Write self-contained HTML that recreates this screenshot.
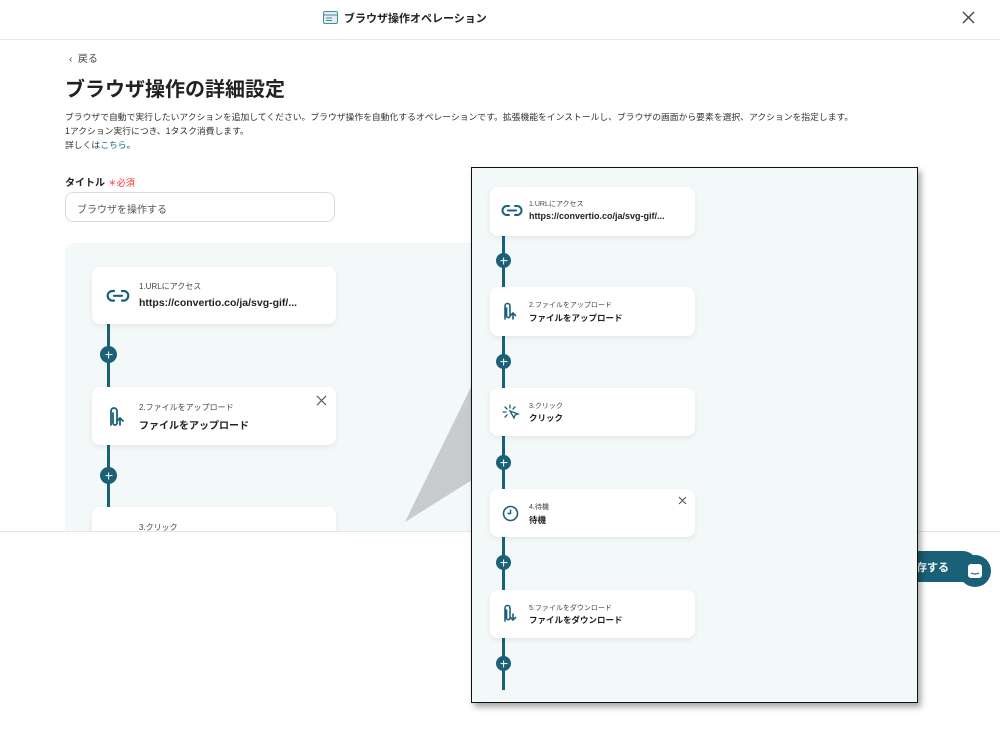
<!DOCTYPE html>
<html><head><meta charset="utf-8"><style>
*{box-sizing:border-box;margin:0;padding:0}
body{width:1000px;height:740px;overflow:hidden;background:#fff;font-family:"Liberation Sans","Noto Sans CJK JP",sans-serif;color:#222;position:relative}
.abs{position:absolute}
.card{position:absolute;background:#fff;border-radius:8px;box-shadow:0 2px 6px rgba(0,0,0,.07)}
.plus{position:absolute;border-radius:50%;background:#1a6178}
.plus::before,.plus::after{content:"";position:absolute;background:#fff;left:50%;top:50%;transform:translate(-50%,-50%)}
.plus::before{width:7px;height:1.8px}
.plus::after{width:1.8px;height:7px}
.line{position:absolute;background:#1a6178}
.sm{position:absolute;font-size:8px;color:#444}
.bd{position:absolute;font-weight:bold;color:#222}
</style></head><body>
<div class="abs" style="left:0;top:0;width:1000px;height:40px;border-bottom:1px solid #e6e8e8"></div>
<svg class="abs" style="left:323px;top:11px" width="15" height="13"><rect x="0.5" y="0.5" width="14" height="12" rx="1.5" fill="#e3eef1" stroke="#4a8ba0"/><line x1="1" y1="4" x2="14" y2="4" stroke="#4a8ba0"/><line x1="3" y1="7" x2="9" y2="7" stroke="#4a8ba0"/><line x1="3" y1="9.5" x2="9" y2="9.5" stroke="#4a8ba0"/></svg>
<div class="bd" style="left:344px;top:10px;font-size:11px">ブラウザ操作オペレーション</div>
<svg class="abs" style="left:962px;top:11px" width="13" height="13"><path d="M1 1L12 12M12 1L1 12" stroke="#444" stroke-width="1.4"/></svg>
<div class="abs" style="left:69px;top:50px;font-size:10px;color:#444">‹&nbsp;&nbsp;戻る</div>
<div class="bd" style="left:65px;top:73px;font-size:20px">ブラウザ操作の詳細設定</div>
<div class="abs" style="left:65px;top:110px;font-size:8.8px;line-height:14px;color:#333">ブラウザで自動で実行したいアクションを追加してください。ブラウザ操作を自動化するオペレーションです。拡張機能をインストールし、ブラウザの画面から要素を選択、アクションを指定します。<br>1アクション実行につき、1タスク消費します。<br>詳しくは<span style="color:#1a6b8a">こちら</span>。</div>
<div class="bd" style="left:65px;top:174px;font-size:10px">タイトル <span style="color:#e33;font-weight:normal;font-size:9px">＊必須</span></div>
<div class="abs" style="left:65px;top:192px;width:270px;height:30px;border:1px solid #d6dcdf;border-radius:8px;font-size:10px;color:#555;padding:8px 0 0 11px">ブラウザを操作する</div>
<div class="abs" style="left:65px;top:243px;width:850px;height:288px;background:#f3f8f8;border-radius:10px 10px 0 0"></div>
<div class="line" style="left:107px;top:320px;width:3px;height:211px"></div>
<div class="card" style="left:92px;top:267px;width:244px;height:57px"></div>
<svg class="abs" style="left:106px;top:289px" width="24" height="14"><path d="M8 2H6.5a4.8 4.8 0 0 0 0 9.6H8M16 2h1.5a4.8 4.8 0 0 1 0 9.6H16M8 6.8h8" fill="none" stroke="#1a6178" stroke-width="2.2" stroke-linecap="round"/></svg>
<div class="sm" style="left:139px;top:281px">1.URLにアクセス</div>
<div class="bd" style="left:139px;top:297px;font-size:10.5px">https://convertio.co/ja/svg-gif/...</div>
<div class="plus" style="left:100px;top:346px;width:17px;height:17px"></div>
<div class="card" style="left:92px;top:387px;width:244px;height:58px"></div>
<svg class="abs" style="left:107px;top:405px" width="22" height="22"><path d="M4 20V6a3 3 0 0 1 6 0v12a2 2 0 0 1-4 0V8M13 20V13M10 16l3-3 3 3" fill="none" stroke="#1a6178" stroke-width="1.8" stroke-linecap="round"/></svg>
<svg class="abs" style="left:316px;top:395px" width="11" height="11"><path d="M1 1L10 10M10 1L1 10" stroke="#555" stroke-width="1.2"/></svg>
<div class="sm" style="left:139px;top:402px">2.ファイルをアップロード</div>
<div class="bd" style="left:139px;top:417px;font-size:10px">ファイルをアップロード</div>
<div class="plus" style="left:100px;top:467px;width:17px;height:17px"></div>
<div class="card" style="left:92px;top:507px;width:244px;height:40px"></div>
<div class="sm" style="left:139px;top:522px">3.クリック</div>
<div class="abs" style="left:0;top:531px;width:1000px;height:209px;background:#fff;border-top:1px solid #e3e6e6"></div>
<div class="abs" style="left:888px;top:551px;width:90px;height:31px;background:#1a6178;border-radius:16px;color:#fff;font-weight:bold;font-size:11px;padding:8px 0 0 17px">保存する</div>
<div class="abs" style="left:959px;top:555px;width:32px;height:32px;border-radius:50%;background:#1a6178"></div>
<svg class="abs" style="left:966px;top:562px" width="18" height="18"><rect x="2" y="2" width="14" height="14" rx="3" fill="#fff"/><path d="M5 11q4 2 8 0" stroke="#1a6178" fill="none" stroke-width="1.2"/></svg>
<svg class="abs" style="left:0;top:0" width="1000" height="740"><polygon points="405,522 472,385 472,480" fill="#c9cccc"/></svg>
<div class="abs" style="left:471px;top:167px;width:447px;height:536px;background:#f3f8f8;border:1px solid #111;box-shadow:3px 4px 6px rgba(0,0,0,.35)"></div>
<div class="line" style="left:502px;top:230px;width:3px;height:460px"></div>
<div class="card" style="left:490px;top:187px;width:205px;height:49px"></div>
<svg class="abs" style="left:501px;top:204px" width="22" height="14"><path d="M8 2H6a4.5 4.5 0 0 0 0 9h2M14 2h2a4.5 4.5 0 0 1 0 9h-2M7 6.5h8" fill="none" stroke="#1a6178" stroke-width="2" stroke-linecap="round"/></svg>
<div class="sm" style="left:529px;top:199px;font-size:7px">1.URLにアクセス</div>
<div class="bd" style="left:529px;top:211px;font-size:9px">https://convertio.co/ja/svg-gif/...</div>
<div class="plus" style="left:496px;top:253px;width:15px;height:15px"></div>
<div class="card" style="left:490px;top:287px;width:205px;height:49px"></div>
<svg class="abs" style="left:502px;top:301px" width="18" height="20"><path d="M3 18V5a2.5 2.5 0 0 1 5 0v10a1.7 1.7 0 0 1-3.4 0V7M11 18V12M8.5 14.5L11 12l2.5 2.5" fill="none" stroke="#1a6178" stroke-width="1.6" stroke-linecap="round"/></svg>
<div class="sm" style="left:529px;top:300px;font-size:7px">2.ファイルをアップロード</div>
<div class="bd" style="left:529px;top:312px;font-size:8.5px">ファイルをアップロード</div>
<div class="plus" style="left:496px;top:354px;width:15px;height:15px"></div>
<div class="card" style="left:490px;top:388px;width:205px;height:48px"></div>
<svg class="abs" style="left:502px;top:404px" width="18" height="16"><path d="M8 1v3M3 3l2 2M13 3l-2 2M1 8h3M3 13l2-2M8 7l8 3-3 1-1 3z" fill="none" stroke="#1a6178" stroke-width="1.3" stroke-linecap="round"/></svg>
<div class="sm" style="left:529px;top:401px;font-size:7px">3.クリック</div>
<div class="bd" style="left:529px;top:412px;font-size:8.5px">クリック</div>
<div class="plus" style="left:496px;top:455px;width:15px;height:15px"></div>
<div class="card" style="left:490px;top:489px;width:205px;height:48px"></div>
<svg class="abs" style="left:502px;top:505px" width="17" height="17"><circle cx="8.5" cy="8.5" r="7" fill="none" stroke="#1a6178" stroke-width="1.6"/><path d="M8.5 4.5v4h-3" fill="none" stroke="#1a6178" stroke-width="1.5"/></svg>
<svg class="abs" style="left:678px;top:496px" width="9" height="9"><path d="M1 1L8 8M8 1L1 8" stroke="#555" stroke-width="1.1"/></svg>
<div class="sm" style="left:529px;top:502px;font-size:7px">4.待機</div>
<div class="bd" style="left:529px;top:514px;font-size:8.5px">待機</div>
<div class="plus" style="left:496px;top:555px;width:15px;height:15px"></div>
<div class="card" style="left:490px;top:590px;width:205px;height:48px"></div>
<svg class="abs" style="left:502px;top:603px" width="18" height="20"><path d="M3 18V5a2.5 2.5 0 0 1 5 0v10a1.7 1.7 0 0 1-3.4 0V7M11 11V17M8.5 14.5L11 17l2.5-2.5" fill="none" stroke="#1a6178" stroke-width="1.6" stroke-linecap="round"/></svg>
<div class="sm" style="left:529px;top:603px;font-size:7px">5.ファイルをダウンロード</div>
<div class="bd" style="left:529px;top:614px;font-size:8.5px">ファイルをダウンロード</div>
<div class="plus" style="left:496px;top:656px;width:15px;height:15px"></div>
</body></html>
